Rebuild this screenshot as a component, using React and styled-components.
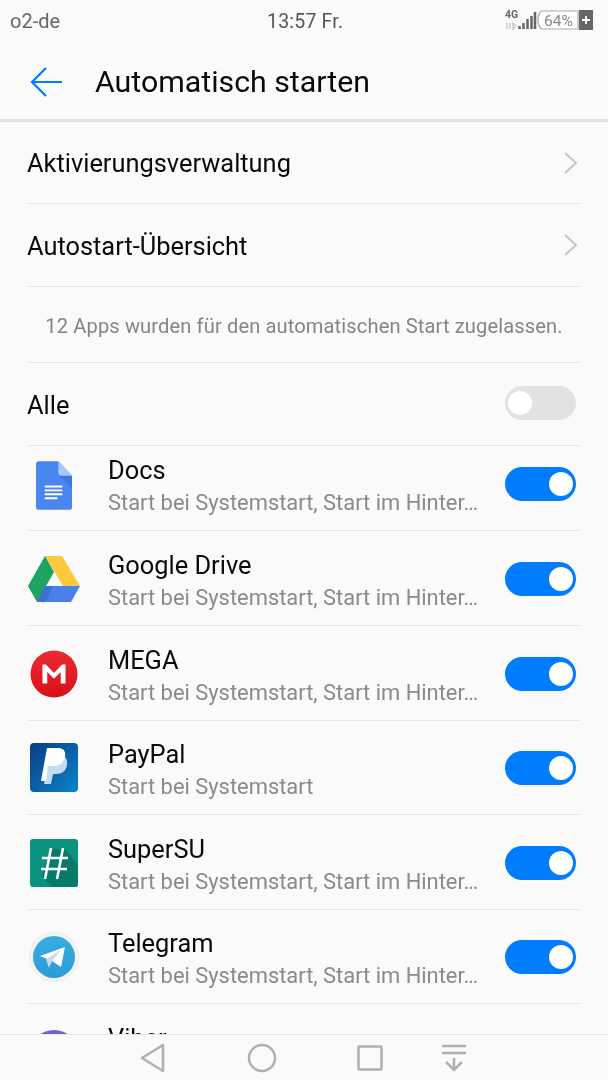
import React from "react";
import styled, { createGlobalStyle } from "styled-components";

const Global = createGlobalStyle`
  html, body { margin: 0; padding: 0; background: #fafafa; }
  * { box-sizing: border-box; }
`;

const Page = styled.div`
  width: 608px; height: 1080px; background: #fafafa; overflow: hidden;
  display: flex; flex-direction: column;
  font-family: Roboto, "Noto Sans", sans-serif;
  filter: blur(0.35px);
`;
const StatusBar = styled.div`
  height: 38px; flex: none; position: relative; display: flex; align-items: center; justify-content: space-between;
  padding: 3px 15px 0 10px; color: #666; font-size: 20px;
`;
const Clock = styled.span`
  position: absolute; left: 267px; top: 10px; letter-spacing: .2px; font-size: 19.5px; color: #555;
`;
const StatusSvg = styled.svg`margin-top: -1px;`;
const TitleBar = styled.div`
  height: 81px; flex: none; display: flex; align-items: center; padding: 6px 0 0 30px; gap: 31px;
`;
const Title = styled.h1`
  margin: 0; font-weight: 400; font-size: 30.3px; color: #0a0a0a;
`;
const HeavyRule = styled.div`height: 3px; flex: none; background: #e4e4e4;`;
const Body = styled.div`flex: 1; min-height: 0; overflow: hidden; padding: 0 27px;`;
const NavRow = styled.div`
  height: ${p => p.$h}px; display: flex; align-items: center; justify-content: space-between;
  border-bottom: 1px solid #e6e6e6; padding-right: ${p => p.$pr || 0}px;
  font-size: 25.4px; color: #0a0a0a;
`;
const RowLabel = styled.span`margin-top: ${p => p.$mt || 0}px;`;
const Info = styled.div`
  height: 76px; display: flex; align-items: center; justify-content: center; padding-top: 2px;
  border-bottom: 1px solid #e6e6e6; font-size: 20.1px; color: #858585; letter-spacing: .12px; white-space: nowrap;
`;
const AppRow = styled.div`
  height: ${p => p.$h}px; display: flex; align-items: flex-end; border-bottom: 1px solid #e6e6e6;
`;
const IconSlot = styled.div`
  width: 81px; height: 52px; flex: none; display: flex; align-items: center; padding-bottom: 2px;
  align-self: flex-end; margin-bottom: 19px;
`;
const IconBox = styled.div`
  display: flex; margin-left: ${p => p.$ml || 0}px; margin-top: ${p => p.$mt || 0}px;
`;
const Texts = styled.div`
  flex: 1; min-width: 0; display: flex; flex-direction: column; align-self: flex-end; padding-bottom: 11px;
`;
const AppName = styled.div`font-size: 25.4px; color: #0a0a0a; line-height: 32px; margin-bottom: 1px;`;
const AppSub = styled.div`
  font-size: 21.9px; color: #8a8a8a; line-height: 32px; white-space: nowrap;
`;
const Toggle = styled.div`
  width: 71px; height: 34px; border-radius: 17px; flex: none; margin-right: 5px;
  display: flex; align-items: center; padding: 0 3px;
  justify-content: ${p => (p.$on ? "flex-end" : "flex-start")};
  background: ${p => (p.$on ? "#007dff" : "#e2e2e2")};
  align-self: ${p => (p.$inRow ? "flex-end" : "auto")};
  margin-bottom: ${p => (p.$inRow ? "29px" : "2px")};
  &::after { content: ""; width: 24px; height: 24px; border-radius: 50%; background: #fff; }
`;
const BottomNav = styled.div`
  height: 46px; flex: none; border-top: 1px solid #e6e6e6; background: #fafafa;
  display: grid; grid-template-columns: 108px 108px 108px 60px; justify-content: start; justify-items: center; align-items: center;
  padding-left: 100px;
`;
const Chevron = () => (
  <svg width="16" height="24" viewBox="0 0 16 24" fill="none" stroke="#c4c4c4" strokeWidth="2"><path d="M2 2l11 10L2 22" /></svg>
);
const Back = () => (
  <svg width="34" height="32" viewBox="0 0 34 32" fill="none" stroke="#007dff" strokeWidth="2.2"><path d="M32 16H3M16 2 2 16l14 14" /></svg>
);
const StatusIcons = () => (
  <StatusSvg width="88" height="24" viewBox="0 0 88 24" fill="none">
    <text x="0" y="10" fontSize="10.500" fontWeight="700" fill="#666" fontFamily="Roboto">4G</text>
    <path d="M2 15v6M5 15v6M8 15l3 3-3 3z" stroke="#c4c4c4" strokeWidth="1.200" />
    <path d="M14.500 21v-3M18.500 21v-6M22.500 21v-10M26.500 21v-13M30 21V4" stroke="#666" strokeWidth="2.500" />
    <path d="M37 3q-3 1-3 4l-1 2v6l1 2q0 3 3 4h36V3z" stroke="#aaa" strokeWidth="1.200" fill="#fff" />
    <text x="39" y="18" fontSize="15.500" fill="#888" fontFamily="Roboto">64%</text>
    <rect x="74" y="2" width="14" height="20" fill="#666" />
    <path d="M77 12h8M81 8v8" stroke="#fff" strokeWidth="1.800" />
  </StatusSvg>
);
const DocsIcon = () => (
  <svg width="37" height="51" viewBox="0 0 38 52">
    <path d="M3 1h20l14 15v32a3 3 0 0 1-3 3H3a3 3 0 0 1-3-3V4a3 3 0 0 1 3-3z" fill="#4a86f0" />
    <path d="M23 15l14 14V16z" fill="#3d6fd0" opacity=".7" />
    <path d="M23 1l14 15H26a3 3 0 0 1-3-3z" fill="#a9c6fa" />
    <path d="M9 26h18v2H9zM9 30h18v2H9zM9 34h18v2H9zM9 38h13v2H9z" fill="#fff" />
  </svg>
);
const DriveIcon = () => (
  <svg width="52" height="46" viewBox="0 0 52 46">
    <path d="M17 0h17l18 30H35z" fill="#fdc83c" />
    <path d="M17 0 0 30l9 16 17-30z" fill="#1da362" />
    <path d="M17 30h35l-9 16H9z" fill="#4a80ea" />
    <path d="M17 30h8l-7 16H9z" fill="#3d6fd0" />
  </svg>
);
const MegaIcon = () => (
  <svg width="48" height="48" viewBox="0 0 50 50">
    <defs><linearGradient id="mega" x1="0" y1="0" x2="0" y2="1"><stop offset="0" stopColor="#ed2a30" /><stop offset="1" stopColor="#d80f1a" /></linearGradient></defs>
    <circle cx="25" cy="25" r="24.500" fill="url(#mega)" />
    <path d="M13 35V15h3.500L25 24l8.500-9H37v20h-5V23l-7 7-7-7v12z" fill="#fff" />
  </svg>
);
const PayPalIcon = () => (
  <svg width="48" height="50" viewBox="0 0 48 50">
    <defs><linearGradient id="pp" x1="0" y1="0" x2="1" y2="1"><stop offset="0" stopColor="#0a3f84" /><stop offset=".5" stopColor="#0b5fa8" /><stop offset="1" stopColor="#0a85c9" /></linearGradient></defs>
    <rect x="0" y="0" width="48" height="49" rx="4" fill="url(#pp)" />
    <path d="M20 12h9c6 0 9 4 8 10-1 6-5 9-11 9h-3l-2 10h-7z" fill="#c3dcef" />
    <path d="M17 5h11c5 0 8 3 7 8-1 7-6 10-12 10h-5l-2 15H11z" fill="#fff" />
  </svg>
);
const SuperSUIcon = () => (
  <svg width="48" height="48" viewBox="0 0 48 48">
    <rect width="48" height="48" rx="3" fill="#0b9380" />
    <path d="M20 10 12 38l10 10h23a3 3 0 0 0 3-3V26L35 10z" fill="#087a6a" />
    <path d="M21 9 15 40M33 9l-6 31M12 19h26M11 30h26" stroke="#fff" strokeWidth="2.600" fill="none" />
  </svg>
);
const TelegramIcon = () => (
  <svg width="50" height="50" viewBox="0 0 50 50">
    <defs><linearGradient id="tg" x1="0" y1="0" x2="0" y2="1"><stop offset="0" stopColor="#37aee2" /><stop offset="1" stopColor="#2a9bd6" /></linearGradient></defs>
    <circle cx="25" cy="25" r="24.500" fill="#f4f4f4" stroke="#ececec" />
    <circle cx="25" cy="25" r="21" fill="url(#tg)" />
    <path d="M11 24 36 15l-4 20-9-6z" fill="#fff" />
    <path d="M17 27l3 9 3-7 9-11z" fill="#c8daea" />
  </svg>
);
const ViberIcon = () => (
  <svg width="48" height="50" viewBox="0 0 48 50"><circle cx="24" cy="27" r="24" fill="#7360c8" /></svg>
);

const NavBack = () => (
  <svg width="30" height="32" viewBox="0 0 30 32" fill="none" stroke="#b0b0b0" strokeWidth="2.500" strokeLinejoin="round"><path d="M3 16 24 3v26z" /></svg>
);
const NavHome = () => (
  <svg width="30" height="30" viewBox="0 0 30 30" fill="none" stroke="#b0b0b0" strokeWidth="2.500"><circle cx="15" cy="15" r="13" /></svg>
);
const NavRecent = () => (
  <svg width="26" height="26" viewBox="0 0 26 26" fill="none" stroke="#b0b0b0" strokeWidth="2.500" strokeLinejoin="round"><rect x="1.500" y="1.500" width="23" height="23" rx="1" /></svg>
);
const NavDown = () => (
  <svg width="26" height="28" viewBox="0 0 26 28" fill="none" stroke="#b0b0b0" strokeWidth="2.500"><path d="M1 2h24M1 9h24M13 14v12M5 18l8 8 8-8" /></svg>
);

const LONG = "Start bei Systemstart, Start im Hinter…";
const apps = [
  { name: "Docs", sub: LONG, icon: <DocsIcon />, h: 85, ml: 9, mt: 2 },
  { name: "Google Drive", sub: LONG, icon: <DriveIcon />, h: 95, ml: 1 },
  { name: "MEGA", sub: LONG, icon: <MegaIcon />, h: 94.5, ml: 3 },
  { name: "PayPal", sub: "Start bei Systemstart", icon: <PayPalIcon />, h: 94.5, ml: 3 },
  { name: "SuperSU", sub: LONG, icon: <SuperSUIcon />, h: 94.5, ml: 3 },
  { name: "Telegram", sub: LONG, icon: <TelegramIcon />, h: 94.5, ml: 2 },
  { name: "Viber", sub: LONG, icon: <ViberIcon />, h: 94.5, ml: 3 },
];

export default function App() {
  return (
    <Page>
      <Global />
      <StatusBar>
        <span>o2-de</span>
        <Clock>13:57 Fr.</Clock>
        <StatusIcons />
      </StatusBar>
      <TitleBar>
        <Back />
        <Title>Automatisch starten</Title>
      </TitleBar>
      <HeavyRule />
      <Body>
        <NavRow $h={82} $pr={2}><RowLabel>Aktivierungsverwaltung</RowLabel><Chevron /></NavRow>
        <NavRow $h={83} $pr={2}><RowLabel $mt={2}>Autostart-Übersicht</RowLabel><Chevron /></NavRow>
        <Info>12 Apps wurden für den automatischen Start zugelassen.</Info>
        <NavRow $h={83}><RowLabel $mt={2}>Alle</RowLabel><Toggle /></NavRow>
        {apps.map(a => (
          <AppRow key={a.name} $h={a.h}>
            <IconSlot><IconBox $ml={a.ml} $mt={a.mt}>{a.icon}</IconBox></IconSlot>
            <Texts>
              <AppName>{a.name}</AppName>
              <AppSub>{a.sub}</AppSub>
            </Texts>
            <Toggle $on $inRow />
          </AppRow>
        ))}
      </Body>
      <BottomNav>
        <NavBack />
        <NavHome />
        <NavRecent />
        <NavDown />
      </BottomNav>
    </Page>
  );
}
